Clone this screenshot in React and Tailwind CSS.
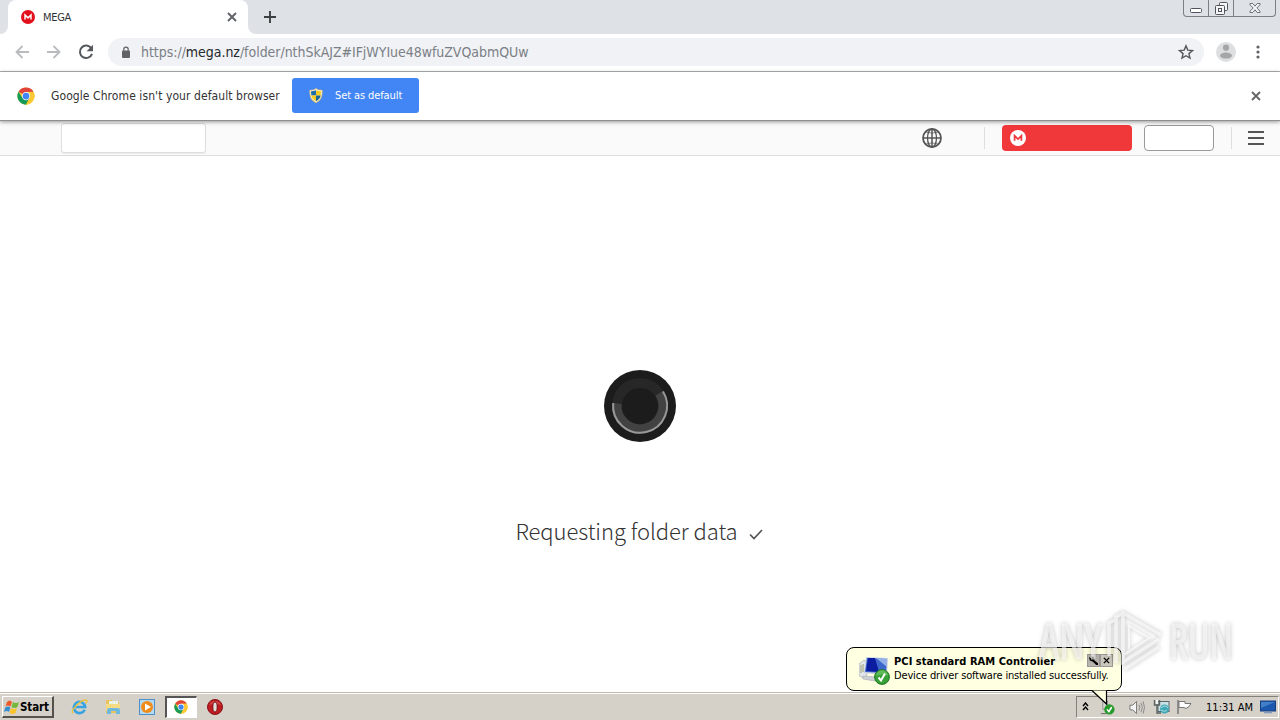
import React from 'react';

const MegaLogo = ({ className, bg, fg }) => (
    <svg viewBox="0 0 16 16" className={className}>
        <circle cx="8" cy="8" r="8" fill={bg} />
        <path d="M4.6 10.800V5.800L8 9l3.400-3.200v5" fill="none" stroke={fg} strokeWidth="1.700" />
    </svg>
);

const ChromeLogo = ({ className }) => (
    <svg viewBox="0 0 48 48" className={className}>
        <circle cx="24" cy="24" r="23" fill="#fcc934" />
        <path d="M24 24 4.1 12.5A23 23 0 0 1 43.9 12.5L24 13z" fill="#e0443a" />
        <path d="M4.1 12.5A23 23 0 0 0 24 47l9.5-17.5L24 24 14.5 29.5z" fill="#159a57" />
        <path d="M24 13h20A23 23 0 0 1 24 47l9.5-17.5z" fill="#fcc934" />
        <circle cx="24" cy="24" r="11" fill="#fff" />
        <circle cx="24" cy="24" r="9" fill="#4285f4" />
    </svg>
);

const CloseIcon = ({ className }) => (
    <svg viewBox="0 0 10 10" className={className}>
        <path d="M1 1l8 8M9 1L1 9" stroke="currentColor" strokeWidth="1.9" />
    </svg>
);

const CheckBadge = ({ className }) => (
    <svg viewBox="0 0 16 16" className={className}>
        <circle cx="8" cy="8" r="7.4" fill="#36a136" stroke="#1c7524" />
        <path d="M2 7a6 6 0 0 1 12 0q-6-3-12 0" fill="#72c568" opacity=".7" />
        <path d="M4.5 8.5l2.5 3 4-7" fill="none" stroke="#fff" strokeWidth="2" />
    </svg>
);

function TabStrip() {
    return (
        <div className="flex h-[34px] bg-[#dee1e6]">
            <div className="flex w-2 items-end overflow-hidden bg-white">
                <div className="h-full w-2 rounded-br-lg bg-[#dee1e6]" />
            </div>
            <div className="flex w-60 items-center rounded-t-lg bg-white pl-[13px] pr-[11px]">
                <MegaLogo className="size-[14px]" bg="#e2101c" fg="#fff" />
                <span className="mt-[2px] ml-[8px] text-[11px] tracking-[-0.3px] text-[#303336]">MEGA</span>
                <CloseIcon className="ml-auto size-[10px] text-[#5f6368]" />
            </div>
            <div className="w-2 bg-white">
                <div className="h-full w-2 rounded-bl-lg bg-[#dee1e6]" />
            </div>
            <svg viewBox="0 0 12 12" className="ml-2 mt-[11px] size-3">
                <path d="M6 0v12M0 6h12" stroke="#3c4043" strokeWidth="1.9" />
            </svg>
            <div className="ml-auto mr-1 flex h-[17px] w-[93px] rounded-b border border-t-0 border-[#7b8088] text-[#50555c]">
                <div className="flex w-[25px] justify-center border-r border-[#7b8088]">
                    <svg viewBox="0 0 12 5" className="mt-2 h-[5px] w-3">
                        <rect x=".5" y=".5" width="11" height="4" rx="1" fill="#fff" stroke="currentColor" />
                    </svg>
                </div>
                <div className="flex w-[25px] justify-center border-r border-[#7b8088]">
                    <svg viewBox="0 0 13 13" className="mt-[2px] size-[13px]" fill="#f4f5f7" stroke="currentColor">
                        <rect x="4.5" y=".5" width="8" height="8" rx="1" />
                        <rect x=".5" y="3.5" width="9" height="9" rx="1" />
                        <rect x="3.5" y="6.5" width="3" height="3" />
                    </svg>
                </div>
                <div className="flex flex-1 justify-center">
                    <svg viewBox="0 0 13 11" className="mt-[3px] h-[10px] w-3">
                        <path d="M1 .5h3l2.5 3 2.5-3h3v1.500L8.500 5.500 12 9v1.500H9L6.500 7.500 4 10.500H1V9l3.500-3.500L1 2z" fill="#f4f5f7" stroke="currentColor" strokeWidth=".9" />
                    </svg>
                </div>
            </div>
        </div>
    );
}

function Toolbar() {
    return (
        <div className="flex h-[38px] items-center border-b border-[#b0b1b3] bg-white pr-[15px] pb-px pl-[15px]">
            <svg viewBox="0 0 14 14" className="size-[14px]" fill="none" stroke="#b9bbbe" strokeWidth="1.8">
                <path d="M14 7H1.500M7.500 1l-6 6 6 6" />
            </svg>
            <svg viewBox="0 0 14 14" className="ml-[18px] size-[14px]" fill="none" stroke="#b9bbbe" strokeWidth="1.8">
                <path d="M0 7h12.500M6.500 1l6 6-6 6" />
            </svg>
            <svg viewBox="0 0 16 16" className="ml-[17px] size-4">
                <path d="M13.300 4.300A6.200 6.200 0 1 0 14 9.800" fill="none" stroke="#55585c" strokeWidth="2" />
                <path d="M15 .8v6.400H8.600z" fill="#55585c" />
            </svg>
            <div className="ml-[14px] flex h-7 w-[1096px] items-center rounded-full bg-[#f0f2f5] pr-[10px] pl-[13px]">
                <svg viewBox="0 0 10 13" className="h-[13px] w-[10px]">
                    <rect x="1" y="4.500" width="8" height="7.500" rx="1" fill="#5f6368" />
                    <path d="M2.800 5V3.400a2.200 2.200 0 0 1 4.400 0V5" fill="none" stroke="#5f6368" strokeWidth="1.200" />
                </svg>
                <span className="ml-[10px] text-[14px] tracking-[-0.04px] whitespace-nowrap text-[#7b7f85]">
                    https://<span className="text-[#25282c]">mega.nz</span>/folder/nthSkAJZ#IFjWYIue48wfuZVQabmQUw
                </span>
                <svg viewBox="0 0 24 24" className="ml-auto size-4">
                    <path d="M12 2.800l2.700 6.400 7 .6-5.300 4.600 1.600 6.800-6-3.600-6 3.600 1.600-6.800L2.300 9.800l7-.6z" fill="none" stroke="#55585c" strokeWidth="2.100" />
                </svg>
            </div>
            <svg viewBox="0 0 20 20" className="ml-3 size-5">
                <circle cx="10" cy="10" r="10" fill="#dedfe0" />
                <circle cx="10" cy="5.700" r="3.100" fill="#a5a6a7" />
                <ellipse cx="10" cy="13.600" rx="6" ry="3" fill="#a5a6a7" />
            </svg>
            <svg viewBox="0 0 4 14" className="ml-auto mr-[5px] h-[14px] w-1 text-[#5f6368]" fill="currentColor">
                <circle cx="2" cy="2" r="1.600" />
                <circle cx="2" cy="7" r="1.600" />
                <circle cx="2" cy="12" r="1.600" />
            </svg>
        </div>
    );
}

function InfoBar() {
    return (
        <div className="z-10 flex h-[49px] items-center border-b border-[#8e8e8e] bg-white pr-[19px] pb-px pl-[17px] shadow-[0_1px_4px_rgba(0,0,0,0.4)]">
            <ChromeLogo className="mt-px size-[18px]" />
            <span className="ml-4 w-[241px] text-[12px] tracking-[0.08px] whitespace-nowrap text-[#333]">
                Google Chrome isn't your default browser
            </span>
            <button className="flex h-[35px] w-[127px] items-center rounded-[3px] bg-[#4285f4] pl-[17px] text-[11px] text-white">
                <svg viewBox="0 0 14 16" className="h-[15px] w-[14px]">
                    <path d="M7 0l2 1.500L14 2c0 7-1 11-7 14C1 13 0 9 0 2l5-.5z" fill="#e7c878" />
                    <path d="M7 1l2 1.500 4 .3c0 6-1 9-6 12-5-3-6-6-6-12l4-.3z" fill="#f7f7ef" />
                    <path d="M7 2.500V8H2L1.700 3.500q3 0 5.300-1" fill="#1f6da8" />
                    <path d="M7 2.500V8h5l.3-4.500q-3 0-5.300-1" fill="#f6cb21" />
                    <path d="M7 8v6C4 12.500 2.500 11 2 8" fill="#f6cb21" />
                    <path d="M7 8v6c3-1.500 4.500-3 5-6" fill="#1c678f" />
                </svg>
                <span className="mt-px ml-3 tracking-[-0.1px] whitespace-nowrap">Set as default</span>
            </button>
            <CloseIcon className="mt-px ml-auto size-[10px] text-[#666]" />
        </div>
    );
}

function SiteHeader() {
    return (
        <div className="flex h-[35px] items-center border-b border-[#dedede] bg-[#fafafa]">
            <div className="ml-[61px] h-[30px] w-[145px] rounded-[3px] border border-[#dedede] bg-white shadow-[0_1px_1px_rgba(0,0,0,0.06)]" />
            <svg viewBox="0 0 20 20" className="ml-auto size-5" fill="none" stroke="#555" strokeWidth="1.800">
                <circle cx="10" cy="10" r="9" />
                <ellipse cx="10" cy="10" rx="4.500" ry="9" strokeWidth="1.300" />
                <path d="M10 1v18M1 10h18" strokeWidth="1.500" />
                <path d="M3.500 4q6.500 2.200 13 0M3.500 16q6.500-2.200 13 0" strokeWidth=".7" />
            </svg>
            <div className="ml-[42px] h-[22px] w-px bg-[#dedede]" />
            <div className="ml-[17px] flex h-[26px] w-[130px] items-center rounded-[4px] bg-[#f0373a] pl-2">
                <MegaLogo className="size-4" bg="#fff" fg="#f0373a" />
            </div>
            <div className="ml-3 h-[26px] w-[70px] rounded-[4px] border border-[#999] bg-white" />
            <div className="ml-[17px] h-[22px] w-px bg-[#dedede]" />
            <div className="mr-4 ml-4 flex flex-col gap-[4px]">
                <div className="h-[2px] w-4 bg-[#555]" />
                <div className="h-[2px] w-4 bg-[#555]" />
                <div className="h-[2px] w-4 bg-[#555]" />
            </div>
        </div>
    );
}

function Loader() {
    return (
        <div className="flex flex-1 flex-col items-center bg-white pt-[214px]">
            <svg viewBox="0 0 72 72" className="size-[72px]" fill="none">
                <circle cx="36" cy="36" r="36" fill="#1c1c1c" />
                <circle cx="36" cy="36" r="23" stroke="#272727" strokeWidth="10" />
                <path d="M13.100 33.500A23 23 0 1 0 55.200 23.200" stroke="#424242" strokeWidth="9" />
                <path d="M9.200 33A27 27 0 1 0 59 21.500" stroke="#999" strokeWidth="2" />
            </svg>
            <div className="mt-[72px] flex items-center pr-[2px]">
                <span className="font-['Noto_Sans_CJK_SC',sans-serif] text-[22px] leading-8 font-light tracking-[-0.05px] whitespace-nowrap text-[#333]">
                    Requesting folder data
                </span>
                <svg viewBox="0 0 14 12" className="mt-2 ml-[11px] h-3 w-[14px]">
                    <path d="M1 6.500l4 4L13 2" fill="none" stroke="#555" strokeWidth="1.700" />
                </svg>
            </div>
        </div>
    );
}

function Watermark() {
    return (
        <svg viewBox="0 0 210 70" className="absolute top-[605px] left-[1035px] h-[70px] w-[210px] drop-shadow-[0_0_2px_rgba(0,0,0,0.4)]" fill="none">
            <g fill="#fff" stroke="#fff" opacity=".6" fontFamily="Open Sans, sans-serif" fontSize="49" fontWeight="500">
                <text x="4" y="54" textLength="63" lengthAdjust="spacingAndGlyphs">ANY</text>
                <text x="134" y="54" textLength="64" lengthAdjust="spacingAndGlyphs">RUN</text>
            </g>
            <g stroke="#fff" strokeWidth="3.500" opacity=".65">
                <path d="M124 34L88 57V8l38 22" />
                <path d="M94 44V21l20 12-24 16" strokeWidth="2" />
                <path d="M81 58V12l6-3M74 51V18l6-3M90 64l34-22" />
            </g>
        </svg>
    );
}

function Balloon() {
    return (
        <div className="absolute top-[647px] left-[846px] h-[44px] w-[276px] rounded-lg border border-black bg-[#ffffe1]">
            <div className="flex pt-[7px] pl-3">
                <div className="relative h-[30px] w-[31px]">
                    <svg viewBox="0 0 31 30" className="h-[30px] w-[31px]">
                        <path d="M0 9l5-4 3 2v13l-3 3-5-2z" fill="#e3e6e8" stroke="#9ba1a8" strokeWidth=".6" />
                        <path d="M2 10v8M4 9v8" stroke="#9b9f70" />
                        <path d="M7 2l22 1-1 17-23-2z" fill="#c8d0e2" />
                        <path d="M8 3l20 1-1 14L6 17z" fill="#3d66ca" />
                        <path d="M9 3l7 0 4 14-13-1z" fill="#0b1ca0" />
                        <path d="M17 3l11 1v8z" fill="#93afe9" />
                        <path d="M4 21l14 1-2 4-12-2z" fill="#cdd1d6" stroke="#a3a9b0" strokeWidth=".6" />
                    </svg>
                    <CheckBadge className="absolute top-[14px] left-[15px] size-4" />
                </div>
                <div className="ml-1 text-black">
                    <div className="text-[11px] leading-[13px] font-bold tracking-[0.06px] whitespace-nowrap">PCI standard RAM Controller</div>
                    <div className="mt-[1px] text-[11px] leading-[14px] tracking-[-0.15px] whitespace-nowrap">Device driver software installed successfully.</div>
                </div>
            </div>
            <div className="absolute top-[7px] left-[241px] flex gap-[2px]">
                <div className="size-[11px] bg-[#b8b5ae] outline outline-[#999]">
                    <svg viewBox="0 0 12 12">
                        <path d="M1 2l3 2 0-3 3 2 0 3 4 3 0 2-2 0-4-4-3-1z" fill="#000" />
                    </svg>
                </div>
                <div className="flex size-[11px] items-center justify-center bg-[#c9c6bc] outline outline-[#999]">
                    <svg viewBox="0 0 8 8" className="size-[7px]">
                        <path d="M1 1l6 6M7 1L1 7" stroke="#000" strokeWidth="1.600" />
                    </svg>
                </div>
            </div>
            <svg viewBox="0 0 17 17" className="absolute top-[41px] left-[244px] size-[17px]">
                <path d="M1 1.500L15.500 15V1.500z" fill="#ffffe1" />
                <path d="M1 1.500L15.500 15V1.500" fill="none" stroke="#000" strokeWidth="1.200" />
            </svg>
        </div>
    );
}

function Taskbar() {
    return (
        <div className="flex h-7 items-center border-t border-[#bdb9b1] bg-[#d5d0c8] shadow-[inset_0_1px_0_#fff]">
            <button className="mt-[1px] ml-[2px] flex h-[22px] w-[52px] items-center border-t border-r-2 border-b-2 border-l border-t-white border-r-[#55524e] border-b-[#55524e] border-l-white pl-[1px]">
                <svg viewBox="0 0 16 16" className="size-4">
                    <path d="M3 3q3-3 5 0L6.500 7.500q-3-2-5 0z" fill="#ed5a25" />
                    <path d="M9 3q3 2 6 0l-1.500 5q-3 2-6 0z" fill="#75b83b" />
                    <path d="M1.300 8.500q3-2 5 0L5 13q-2-2-5 0z" fill="#338dce" />
                    <path d="M7 9q3 2 6 0l-1.500 5q-3 2-6 0z" fill="#fac22d" />
                </svg>
                <span className="mt-[2px] text-[11.500px] font-bold tracking-[-0.1px] text-black">Start</span>
            </button>
            <svg viewBox="0 0 18 18" className="ml-[17px] size-[17px]" fill="none">
                <path d="M14.500 12.500A6 6 0 1 1 15 9.500H4.500" stroke="#36a3e2" strokeWidth="2.800" />
                <path d="M2 16C-2 14 12 0 16.500 2.500c1 .8 0 2-1 3" stroke="#ecc13b" strokeWidth="1.500" />
            </svg>
            <svg viewBox="0 0 17 17" className="ml-[17px] size-[17px]">
                <path d="M1 2h6l1 2h6v11H1z" fill="#e9c45e" />
                <path d="M4 3h9v4H4z" fill="#e8f3e4" />
                <path d="M1 6h14v7H1z" fill="#f5dc84" />
                <path d="M2 16v-4q0-2 2-2h9q2 0 2 2v4h-4v-3H6v3z" fill="#70b9de" />
            </svg>
            <svg viewBox="0 0 16 16" className="mt-px ml-[17px] size-4">
                <rect x=".5" y=".5" width="15" height="15" fill="#b6d9f2" stroke="#4a91cc" />
                <circle cx="8" cy="8" r="6" fill="#ef8b18" />
                <path d="M6 4.500v7L12 8z" fill="#fff" />
            </svg>
            <div className="mt-[1px] ml-[10px] flex h-[22px] w-8 items-center justify-center border-t-2 border-r border-b border-l-2 border-t-[#555] border-r-white border-b-white border-l-[#555] bg-white pr-[2px] pb-[2px]">
                <ChromeLogo className="size-[14px]" />
            </div>
            <svg viewBox="0 0 16 16" className="mt-px ml-[10px] size-4">
                <circle cx="8" cy="8" r="7.500" fill="#c01b20" stroke="#851216" />
                <path d="M2 6a6.500 6.500 0 0 1 12 0q-6-2-12 0" fill="#dd6b68" opacity=".5" />
                <ellipse cx="8" cy="8" rx="2.200" ry="5" fill="#e4dedb" stroke="#781014" />
            </svg>
            <div className="mt-[1px] mr-[1px] ml-auto flex h-[22px] w-[203px] items-center border border-t-[#85817a] border-r-white border-b-white border-l-[#85817a]">
                <svg viewBox="0 0 7 9" className="mb-[2px] ml-[5px] h-[9px] w-[7px]">
                    <path d="M1 4l2.500-3L6 4M1 8l2.500-3L6 8" fill="none" stroke="#000" strokeWidth="1.400" />
                </svg>
                <svg viewBox="0 0 16 16" className="ml-[11px] size-[15px]">
                    <path d="M3 1h5v9H3z" fill="#d8d9d7" stroke="#8b8e8c" />
                    <path d="M1 14.500h6" stroke="#666" />
                    <circle cx="10" cy="10" r="5.500" fill="#259a29" />
                    <path d="M7.500 10l2 2.500 3-5" fill="none" stroke="#fff" strokeWidth="1.700" />
                </svg>
                <svg viewBox="0 0 17 16" className="ml-[14px] h-[15px] w-4" fill="none">
                    <path d="M1 5.500h3L8 1.500v13l-4-4H1z" fill="#f4f4f4" stroke="#757575" />
                    <path d="M10.500 5q2 3 0 6M12.700 3q3 5 0 10M15 1.500q3 6.500 0 13" stroke="#858585" />
                </svg>
                <svg viewBox="0 0 17 16" className="ml-[8px] h-4 w-[17px]">
                    <rect x="5" y="2.500" width="11" height="10" fill="#cae1e5" stroke="#54666c" />
                    <path d="M1.500 1v5h5V1M4 6v8h4" fill="none" stroke="#5a6262" strokeWidth="1.400" />
                    <path d="M4 1v4" stroke="#f2f2f2" strokeWidth="2" />
                    <circle cx="11.500" cy="10" r="4.500" fill="#41a7b7" />
                    <path d="M8 9q4-4 7 0M8 11q4 3 6 0" fill="none" stroke="#a6e0dd" />
                </svg>
                <svg viewBox="0 0 17 16" className="ml-[6px] h-4 w-[17px]">
                    <path d="M2 1v14" stroke="#777" strokeWidth="1.500" />
                    <path d="M3 2.500h6v2h6l-2 3-3 2-2-1H3z" fill="#fff" stroke="#777" />
                </svg>
                <span className="mt-[2px] ml-[13px] text-[11px] tracking-[0.02px] whitespace-nowrap text-black">11:31 AM</span>
                <svg viewBox="0 0 16 14" className="mr-[2px] ml-auto h-[14px] w-4">
                    <rect x=".5" y="1" width="15" height="10" fill="#1c58ad" stroke="#164181" />
                    <path d="M1 2h14L1 8z" fill="#427fc9" />
                    <path d="M4 12.500h8" stroke="#809bbd" strokeWidth="1.500" />
                </svg>
            </div>
        </div>
    );
}

function App() {
    return (
        <div className="relative flex h-[720px] w-[1280px] flex-col overflow-hidden bg-white font-['DejaVu_Sans_Condensed','DejaVu_Sans',sans-serif] [font-stretch:condensed]">
            <TabStrip />
            <Toolbar />
            <InfoBar />
            <SiteHeader />
            <Loader />
            <Taskbar />
            <Balloon />
            <Watermark />
        </div>
    );
}

export default App;
